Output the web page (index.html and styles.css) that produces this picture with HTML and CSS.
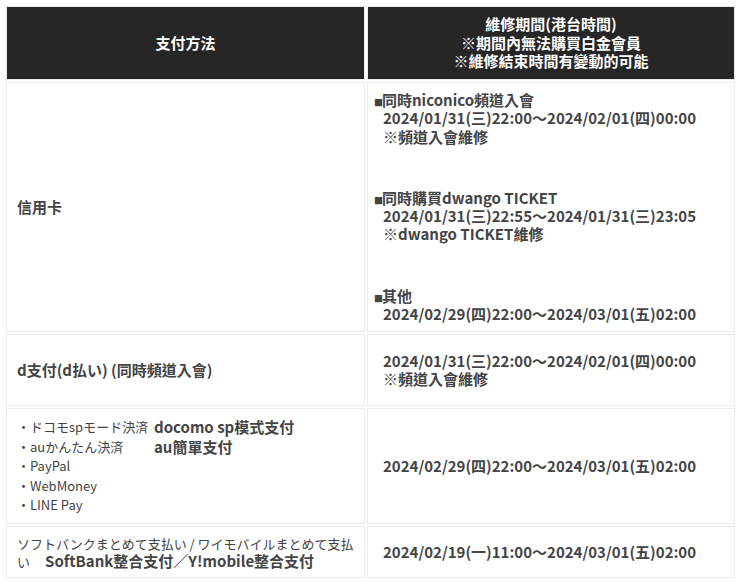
FILE: index.html
```html
<!DOCTYPE html>
<html lang="zh-Hant">
<head>
<meta charset="utf-8">
<title>維修期間</title>
<link rel="stylesheet" href="styles.css">
</head>
<body>
<table class="schedule">
  <colgroup><col class="col-method"><col class="col-period"></colgroup>
  <thead>
    <tr>
      <th>支付方法</th>
      <th>維修期間(港台時間)<br>※期間內無法購買白金會員<br>※維修結束時間有變動的可能</th>
    </tr>
  </thead>
  <tbody>
    <tr>
      <td class="method">信用卡</td>
      <td class="period">
        <div class="block">
          <p class="label"><span class="mark">■</span>同時niconico頻道入會</p>
          <p>2024/01/31(三)22:00～2024/02/01(四)00:00</p>
          <p>※頻道入會維修</p>
        </div>
        <div class="block">
          <p class="label"><span class="mark">■</span>同時購買dwango TICKET</p>
          <p>2024/01/31(三)22:55～2024/01/31(三)23:05</p>
          <p>※dwango TICKET維修</p>
        </div>
        <div class="block">
          <p class="label"><span class="mark">■</span>其他</p>
          <p>2024/02/29(四)22:00～2024/03/01(五)02:00</p>
        </div>
      </td>
    </tr>
    <tr class="row-d">
      <td class="method">d支付(d払い) (同時頻道入會)</td>
      <td class="period">
        <p>2024/01/31(三)22:00～2024/02/01(四)00:00</p>
        <p>※頻道入會維修</p>
      </td>
    </tr>
    <tr>
      <td class="method">
        <div class="list">
          <span class="jp">・ドコモspモード決済</span><span class="zh">docomo sp模式支付</span>
          <span class="jp">・auかんたん決済</span><span class="zh">au簡單支付</span>
          <span class="jp">・PayPal</span><span></span>
          <span class="jp">・WebMoney</span><span></span>
          <span class="jp">・LINE Pay</span><span></span>
        </div>
      </td>
      <td class="period"><p>2024/02/29(四)22:00～2024/03/01(五)02:00</p></td>
    </tr>
    <tr>
      <td class="method mixed"><span class="jp">ソフトバンクまとめて支払い / ワイモバイルまとめて支払<br>い</span>　<span class="zh">SoftBank整合支付／Y!mobile整合支付</span></td>
      <td class="period"><p>2024/02/19(一)11:00～2024/03/01(五)02:00</p></td>
    </tr>
  </tbody>
</table>
</body>
</html>
```
FILE: styles.css
```css
html, body {
  margin: 0;
  padding: 0;
  background: #fff;
}
body {
  font-family: "Noto Sans CJK TC", "Noto Sans", sans-serif;
  color: #444;
  font-size: 15px;
  font-weight: 700;
}
.schedule {
  margin: 4px 0 0 4px;
  width: 733px;
  table-layout: fixed;
  border-collapse: separate;
  border-spacing: 2px;
}
.col-method { width: 359px; }
.col-period { width: 368px; }
.schedule th,
.schedule td {
  border: 1px solid #ececec;
  vertical-align: middle;
}
.schedule th {
  background: #262626;
  color: #fff;
  font-weight: 700;
  text-align: center;
  line-height: 18.5px;
  padding: 8px 10px;
  height: 56px;
}
.schedule td {
  line-height: 18.3px;
  padding: 8px 10px;
  text-align: left;
}
.method {
  padding-left: 10px;
}
.period {
  padding-left: 15px !important;
}
.period p {
  margin: 0;
}
.block + .block {
  margin-top: 43px;
}
.label {
  margin-left: -9px !important;
}
.mark {
  font-size: 9px;
  line-height: 0;
  display: inline-block;
  width: 8px;
  vertical-align: 0;
}
.row-d td {
  height: 54px;
}
.list {
  display: grid;
  grid-template-columns: 137px auto;
  line-height: 19.5px;
}
.jp {
  font-size: 13px;
  font-weight: 400;
}
.zh {
  font-size: 15px;
  font-weight: 700;
}
.mixed {
  line-height: 19px;
  padding-top: 7px !important;
  padding-bottom: 7px !important;
}
.mixed .jp,
.mixed .zh {
  line-height: 0;
}
```
